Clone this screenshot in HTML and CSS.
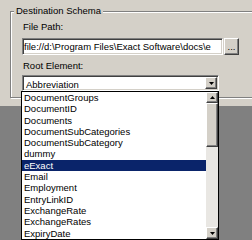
FILE: index.html
```html
<!DOCTYPE html>
<html lang="en">
<head>
    <meta charset="UTF-8">
    <title>Destination Schema</title>
    <link rel="stylesheet" href="styles.css">
</head>
<body>
    <div class="dialog">
        <div class="group">
            <div class="group-title">Destination Schema</div>
            <div class="field-label">File Path:</div>
            <div class="path-row">
                <div class="textbox">file://d:\Program Files\Exact Software\docs\e</div>
                <div class="browse">...</div>
            </div>
            <div class="field-label">Root Element:</div>
            <div class="combo">
                <span class="combo-text">Abbreviation</span>
                <span class="btn3d combo-btn">
                    <svg width="5" height="3" viewBox="0 0 5 3"><polygon points="0,0 5,0 2.5,3" fill="#000"/></svg>
                </span>
            </div>
        </div>
    </div>

    <!-- liste deroulante ouverte par dessus -->
    <div class="dropdown">
        <div class="items">
            <div class="item">DocumentGroups</div>
            <div class="item">DocumentID</div>
            <div class="item">Documents</div>
            <div class="item">DocumentSubCategories</div>
            <div class="item">DocumentSubCategory</div>
            <div class="item">dummy</div>
            <div class="item selected">eExact</div>
            <div class="item">Email</div>
            <div class="item">Employment</div>
            <div class="item">EntryLinkID</div>
            <div class="item">ExchangeRate</div>
            <div class="item">ExchangeRates</div>
            <div class="item">ExpiryDate</div>
        </div>
        <div class="scrollbar">
            <div class="btn3d scroll-up">
                <svg width="5" height="3" viewBox="0 0 5 3"><polygon points="0,3 5,3 2.5,0" fill="#000"/></svg>
            </div>
            <div class="btn3d thumb"></div>
            <div class="track"></div>
            <div class="btn3d scroll-down">
                <svg width="5" height="3" viewBox="0 0 5 3"><polygon points="0,0 5,0 2.5,3" fill="#000"/></svg>
            </div>
        </div>
    </div>
</body>
</html>
```

FILE: styles.css
```css
* {
    margin: 0;
    padding: 0;
    box-sizing: border-box;
}
body {
    width: 252px;
    height: 240px;
    overflow: hidden;
    background: #808080;
    font-family: "Liberation Sans", Arial, sans-serif;
    font-size: 9.5px;
    line-height: 11px;
    color: #000;
    position: relative;
}
.dialog {
    height: 106px;
    background: #d4d0c8;
    padding: 11px 0 0 10px;
    overflow: hidden;
}
.group {
    width: 260px;
    height: 87px;
    border: 1px solid #808080;
    box-shadow: inset 1px 1px 0 #fff, 1px 1px 0 #fff;
    display: flex;
    flex-direction: column;
    align-items: flex-start;
}
.group-title {
    height: 11px;
    margin: -7px 0 0 3px;
    padding: 0 2px;
    background: #d4d0c8;
}
.field-label {
    height: 11px;
    margin: 5px 0 0 12px;
}
.path-row {
    display: flex;
    gap: 1px;
    margin: 6px 0 0 11px;
}
.textbox {
    width: 201px;
    height: 17px;
    padding: 2px 0 0 1px;
    background: #fff;
    border: 1px solid;
    border-color: #808080 #fff #fff #808080;
    box-shadow: inset 1px 1px 0 #404040, inset -1px -1px 0 #d4d0c8;
    white-space: nowrap;
    overflow: hidden;
}
.btn3d {
    background: #d4d0c8;
    border: 1px solid;
    border-color: #fff #404040 #404040 #fff;
    box-shadow: inset -1px -1px 0 #808080;
    display: flex;
    align-items: center;
    justify-content: center;
}
.browse {
    width: 15px;
    height: 17px;
    text-align: center;
    padding-top: 2px;
    background: #d4d0c8;
    border: 1px solid;
    border-color: #fff #404040 #404040 #fff;
    box-shadow: inset -1px -1px 0 #808080;
}
.combo {
    display: flex;
    width: 197px;
    height: 16px;
    margin: 4px 0 0 11px;
    background: #fff;
    border: 1px solid;
    border-color: #808080 #fff #fff #808080;
    box-shadow: inset 1px 1px 0 #404040, inset -1px -1px 0 #d4d0c8;
    padding: 1px;
}
.combo-text {
    flex: 1;
    padding: 2px 0 0 2px;
}
.combo-btn {
    width: 12px;
    height: 12px;
}
.dropdown {
    position: absolute;
    top: 91px;
    left: 21px;
    width: 198px;
    height: 149px;
    border: 1px solid #000;
    background: #fff;
    display: flex;
}
.items {
    flex: 1;
}
.item {
    height: 11.31px;
    line-height: 11.31px;
    padding-left: 2px;
    white-space: nowrap;
}
.item.selected {
    background: #0a246a;
    color: #fff;
}
.scrollbar {
    width: 12px;
    display: flex;
    flex-direction: column;
}
.scroll-up {
    height: 11px;
}
.thumb {
    height: 44px;
}
.track {
    height: 80px;
    background: #e9e7e3;
}
.scroll-down {
    height: 12px;
}
```
